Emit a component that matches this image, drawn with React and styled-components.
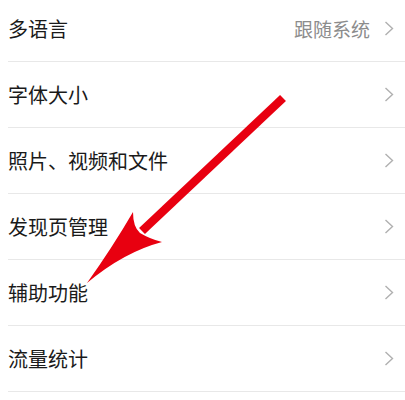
import styled, { createGlobalStyle } from "styled-components";

const GlobalStyle = createGlobalStyle`
    html, body {
        margin: 0;
        padding: 0;
        background: #ffffff;
    }
    body {
        font-family: "Noto Sans CJK SC", "Noto Sans", sans-serif;
    }
`;

const Page = styled.div`
    position: relative;
    width: 405px;
    height: 400px;
    overflow: hidden;
    background: #ffffff;
`;

const List = styled.ul`
    list-style: none;
    margin: -4px 0 0 8px;
    padding: 0;
`;

const Row = styled.li`
    display: flex;
    align-items: center;
    justify-content: space-between;
    height: 65px;
    padding-right: 11px;
    border-bottom: 1px solid #e8e8e8;
`;

const Label = styled.span`
    font-size: 20px;
    color: #1a1a1a;
`;

const Right = styled.div`
    display: flex;
    align-items: center;
    gap: 14px;
`;

const Value = styled.span`
    font-size: 19px;
    color: #8c8c8c;
`;

const Chevron = () => (
    <svg width="10" height="15" viewBox="0 0 10 15">
        <path d="M1.5 1 L8.5 7.5 L1.5 14" fill="none" stroke="#b0b0b0" strokeWidth="1.4" />
    </svg>
);

const Arrow = styled.svg`
    position: absolute;
    left: 0;
    top: 0;
    pointer-events: none;
`;

const items = [
    { label: "多语言", value: "跟随系统" },
    { label: "字体大小" },
    { label: "照片、视频和文件" },
    { label: "发现页管理" },
    { label: "辅助功能" },
    { label: "流量统计" },
];

const App = () => {
    return (
        <Page>
            <GlobalStyle />
            <List>
                {items.map((item) => (
                    <Row key={item.label}>
                        <Label>{item.label}</Label>
                        <Right>
                            {item.value && <Value>{item.value}</Value>}
                            <Chevron />
                        </Right>
                    </Row>
                ))}
            </List>
            <Arrow width="405" height="400" viewBox="0 0 405 400">
                <line x1="283" y1="98" x2="142" y2="231" stroke="#e80010" strokeWidth="8.5" />
                <path
                    d="M87 283 Q112 248 133 212 Q133 227 140 233 Q150 239 162 242 Q124 252 87 283 Z"
                    fill="#e80010"
                />
            </Arrow>
        </Page>
    );
};

export default App;
